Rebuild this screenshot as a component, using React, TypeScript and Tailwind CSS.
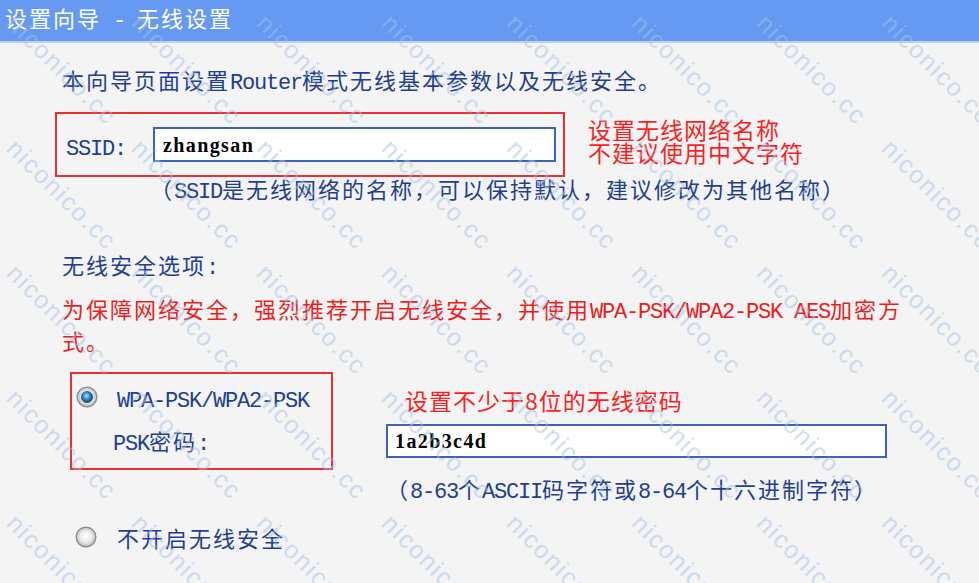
import React from 'react';

const cjk = "font-['Noto_Sans_CJK_SC',sans-serif]";

// half-width ascii runs, 12px per char like the SimSun original
function M({ children }: { children: React.ReactNode }) {
  return <span className="font-['Liberation_Mono','Noto_Sans_CJK_SC',monospace] text-[22px] leading-none tracking-[-1.2px] whitespace-pre">{children}</span>;
}

function Radio({ checked }: { checked?: boolean }) {
  return (
    <svg width="22" height="22" viewBox="0 0 22 22" className="shrink-0">
      <defs>
        <radialGradient id={checked ? 'ringOn' : 'ringOff'} cx="50%" cy="45%" r="55%">
          <stop offset="0" stopColor="#ffffff" />
          <stop offset="0.7" stopColor="#e4e4e4" />
          <stop offset="1" stopColor="#b8b8b8" />
        </radialGradient>
        <radialGradient id="dot" cx="45%" cy="40%" r="60%">
          <stop offset="0" stopColor="#b6e8ff" />
          <stop offset="0.45" stopColor="#3596dc" />
          <stop offset="1" stopColor="#0a3f78" />
        </radialGradient>
      </defs>
      <circle cx="11" cy="11" r="9.8" fill={`url(#${checked ? 'ringOn' : 'ringOff'})`} stroke="#8d8d8d" strokeWidth="1.4" />
      <circle cx="11" cy="11" r="7.6" fill="none" stroke="#d0d0d0" strokeWidth="1.2" />
      {checked && <circle cx="11" cy="11" r="5.6" fill="url(#dot)" stroke="#1e3550" strokeWidth="0.6" />}
    </svg>
  );
}

function Watermarks() {
  const cols = [13, 138, 263, 388, 513, 638, 763, 888];
  const rows = [17, 142, 267, 392, 517];
  return (
    <div className="pointer-events-none absolute inset-0 overflow-hidden">
      {rows.map((y) =>
        cols.map((x) => (
          <div
            key={`${x}-${y}`}
            className="absolute origin-top-left rotate-45 whitespace-nowrap font-['Liberation_Sans',sans-serif] text-[25px] leading-[25px] tracking-[1.8px] text-[#a3c1ea] opacity-50"
            style={{ left: x + 7, top: y - 7 }}
          >
            niconico.cc
          </div>
        ))
      )}
    </div>
  );
}

export default function App() {
  return (
    <div className={`relative w-[979px] h-[583px] overflow-hidden bg-[#f4f4f4] ${cjk} text-[22px] tracking-[2px] text-[#1f3e94]`}>
      <div className="h-[43px] bg-[#6699f2] border-b-2 border-[#bcd0f5] pl-[5px] pb-[6px] flex items-center text-white text-[22px]">
        <div className="whitespace-nowrap">设置向导<M> - </M>无线设置</div>
      </div>

      <div className="mt-[20px] ml-[62px] h-[32px] leading-[32px] whitespace-nowrap">
        本向导页面设置<M>Router</M>模式无线基本参数以及无线安全。
      </div>

      <div className="mt-[17px] h-[65px] flex items-start">
        <div className="ml-[55px] w-[510px] h-[65px] border-2 border-[#ea3030] flex items-center pl-[9px]">
          <div className="w-[87px] shrink-0 h-[24px] leading-[24px]"><M>SSID:</M></div>
          <div className="w-[403px] h-[35px] bg-white border-2 border-[#3f61b6] flex items-center pl-[8px] text-black font-['Liberation_Serif',serif] text-[20px] font-bold tracking-[1.4px]">
            zhangsan
          </div>
        </div>
        <div className="ml-[23px] mt-[6px] text-[#ff1e1e] text-[23px] leading-[23px] tracking-[1px] whitespace-nowrap">
          <div>设置无线网络名称</div>
          <div>不建议使用中文字符</div>
        </div>
      </div>

      <div className="ml-[150px] h-[22px] leading-[22px] whitespace-nowrap">
        （<M>SSID</M>是无线网络的名称，可以保持默认，建议修改为其他名称）
      </div>

      <div className="mt-[49px] ml-[62px] h-[32px] leading-[32px]">
        无线安全选项<M>:</M>
      </div>

      <div className="mt-[12px] ml-[62px] h-[64px] leading-[32px] text-[#f01c1c] whitespace-nowrap">
        <div className="h-[32px]">为保障网络安全，强烈推荐开启无线安全，并使用<M>WPA-PSK/WPA2-PSK AES</M>加密方</div>
        <div className="h-[32px]">式。</div>
      </div>

      <div className="mt-[16px] h-[128px] flex items-start">
        <div className="ml-[70px] w-[263px] h-[98px] border-2 border-[#ea3030] pt-[11px] shrink-0">
          <div className="h-[24px] flex items-center pl-[4px]">
            <Radio checked />
            <div className="ml-[19px] h-[24px] leading-[24px] whitespace-nowrap"><M>WPA-PSK/WPA2-PSK</M></div>
          </div>
          <div className="mt-[19px] h-[24px] pl-[41px] leading-[24px] whitespace-nowrap">
            <M>PSK</M>密码<M>:</M>
          </div>
        </div>
        <div className="ml-[53px]">
          <div className="mt-[16px] pl-[19px] h-[24px] leading-[24px] text-[#ff1e1e] text-[23px] tracking-[1px] whitespace-nowrap">
            设置不少于8位的无线密码
          </div>
          <div className="mt-[12px] w-[501px] h-[34px] bg-white border-2 border-[#3f61b6] flex items-center pl-[7px] text-black font-['Liberation_Serif',serif] text-[20px] font-bold tracking-[1.4px]">
            1a2b3c4d
          </div>
          <div className="mt-[18px] h-[24px] leading-[24px] whitespace-nowrap">
            （<M>8-63</M>个<M>ASCII</M>码字符或<M>8-64</M>个十六进制字符）
          </div>
        </div>
      </div>

      <div className="mt-[25px] ml-[75px] h-[24px] flex items-center">
        <Radio />
        <div className="ml-[20px] h-[24px] leading-[24px]">不开启无线安全</div>
      </div>

      <Watermarks />
    </div>
  );
}
